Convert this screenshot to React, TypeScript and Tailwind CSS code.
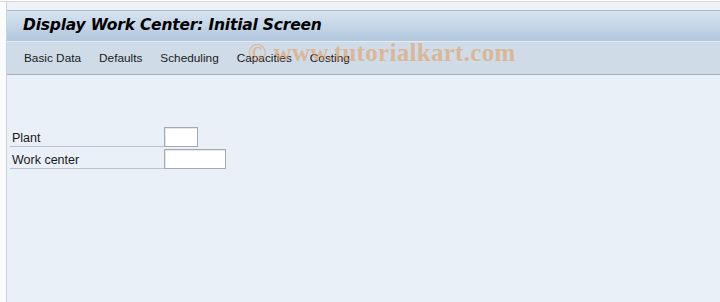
import React from 'react';

const menuItems = ['Basic Data', 'Defaults', 'Scheduling', 'Capacities', 'Costing'];

const fields = [
  { label: 'Plant', width: 'w-[34px]' },
  { label: 'Work center', width: 'w-[62px]' },
];

const App: React.FC = () => {
  return (
    <div className="relative w-[720px] h-[302px] overflow-hidden bg-white flex flex-col font-['Liberation_Sans',Arial,sans-serif]">
      {/* top strip */}
      <div className="h-[2px] border-b border-[#d4d6da] bg-white" />

      <div className="flex flex-1 min-h-0">
        {/* left gutter */}
        <div className="w-[7px] bg-[#fafbfc] border-r border-[#cdd2da]" />

        <div className="flex-1 flex flex-col min-w-0">
          <div className="h-[8px] bg-[#eff3f8]" />

          {/* title bar */}
          <div className="h-[31px] border-t border-[#a9bdd3] bg-gradient-to-b from-[#d7e4f1] to-[#b1c7dd] flex items-center pl-[16px]">
            <h1 className="text-[15.5px] font-bold italic text-black font-['DejaVu_Sans',sans-serif] tracking-[-0.2px]">
              Display Work Center: Initial Screen
            </h1>
          </div>

          {/* menu bar */}
          <div className="h-[34px] border-t border-[#e3ebf3] border-b border-b-[#a3adba] bg-[#cfdce8] flex items-center pl-[17px] pt-[1px] gap-[18px] text-[11.8px] text-[#1a1a1a]">
            {menuItems.map(item => (
              <span key={item}>{item}</span>
            ))}
          </div>

          {/* content */}
          <div className="flex-1 bg-[#e9f0f8] pt-[52px] pl-[3px]">
            <div className="flex flex-col gap-[2px]">
              {fields.map(f => (
                <div key={f.label} className="flex items-stretch h-[20px]">
                  <div className="w-[154px] border-b border-[#b9c1ca] pl-[2px] text-[12.5px] text-[#1a1a1a] flex items-center pt-[3px]">
                    {f.label}
                  </div>
                  <div className={`${f.width} bg-white border border-[#a3aab3] shadow-[inset_1px_1px_0_#e4e8ec]`} />
                </div>
              ))}
            </div>
          </div>
        </div>
      </div>

      {/* watermark */}
      <div className="absolute left-[248px] top-[34px] text-[25px] font-bold text-[#e49a55] opacity-55 font-['Liberation_Serif',serif] tracking-[0.3px] pointer-events-none">
        © www.tutorialkart.com
      </div>
    </div>
  );
};

export default App;
